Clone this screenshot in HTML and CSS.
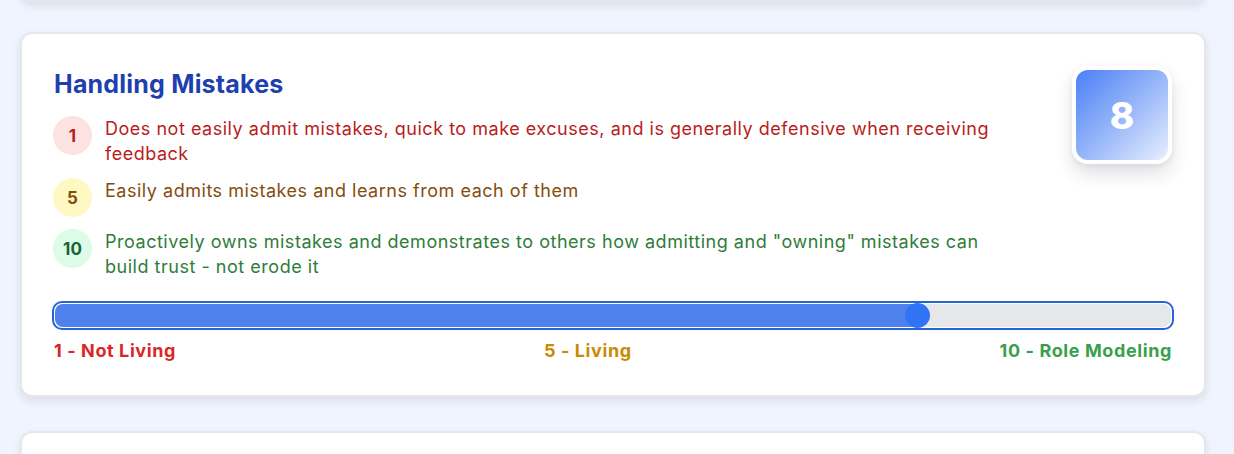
FILE: index.html
```html
<!DOCTYPE html>
<html lang="en">
<head>
<meta charset="utf-8">
<title>Handling Mistakes</title>
<link rel="stylesheet" href="styles.css">
</head>
<body>
<div class="list">
  <div class="card card-prev"></div>

  <section class="card">
    <div class="head">
      <div class="info">
        <h2 class="title">Handling Mistakes</h2>
        <ul class="levels">
          <li class="level level-red">
            <span class="num">1</span>
            <p class="desc">Does not easily admit mistakes, quick to make excuses, and is generally defensive when receiving feedback</p>
          </li>
          <li class="level level-yellow">
            <span class="num">5</span>
            <p class="desc">Easily admits mistakes and learns from each of them</p>
          </li>
          <li class="level level-green">
            <span class="num">10</span>
            <p class="desc">Proactively owns mistakes and demonstrates to others how admitting and "owning" mistakes can build trust - not erode it</p>
          </li>
        </ul>
      </div>
      <div class="score">8</div>
    </div>

    <div class="slider">
      <div class="track">
        <div class="fill" style="width: 77.3%"></div>
        <div class="thumb" style="left: 77.3%"></div>
      </div>
    </div>
    <div class="scale">
      <span class="scale-red">1 - Not Living</span>
      <span class="scale-yellow">5 - Living</span>
      <span class="scale-green">10 - Role Modeling</span>
    </div>
  </section>

  <div class="card card-next"></div>
</div>
</body>
</html>
```

FILE: styles.css
```css
* { box-sizing: border-box; }

html, body {
  margin: 0;
  padding: 0;
  background: #eff4fe;
  font-family: Inter, "Noto Sans", "Liberation Sans", sans-serif;
  overflow: hidden;
}

.list {
  display: flex;
  flex-direction: column;
  gap: 30px;
  padding: 0 28px 0 20px;
  margin-top: -60px;
}

.card {
  background: #ffffff;
  border: 2px solid #e5e7eb;
  border-radius: 12px;
  box-shadow: 0 4px 8px rgba(30, 41, 59, 0.10);
  padding: 34px 32px 32px;
}

.card-prev { height: 62px; padding: 0; }
.card-next { height: 80px; padding: 0; margin-top: 4px; }

.head {
  display: flex;
  align-items: flex-start;
  gap: 62px;
}

.info { flex: 1; min-width: 0; }

.title {
  margin: 0 0 16px;
  font-size: 25px;
  line-height: 32px;
  font-weight: 700;
  color: #1e40af;
  letter-spacing: 0.2px;
}

.levels {
  list-style: none;
  margin: 0;
  padding: 0;
  display: flex;
  flex-direction: column;
  gap: 12px;
}

.level {
  display: flex;
  align-items: flex-start;
  gap: 13px;
}

.num {
  flex: 0 0 39px;
  width: 39px;
  height: 39px;
  border-radius: 50%;
  display: flex;
  align-items: center;
  justify-content: center;
  font-size: 17px;
  font-weight: 700;
  margin-left: -1px;
}

.desc {
  margin: 0;
  font-size: 18px;
  line-height: 25px;
  letter-spacing: 0.52px;
}

.level-red .num { background: #fde2e2; color: #b91c1c; }
.level-red .desc { color: #b91c1c; }
.level-yellow .num { background: #fef9c3; color: #854d0e; }
.level-yellow .desc { color: #854d0e; }
.level-green .num { background: #dcfce7; color: #166534; }
.level-green .desc { color: #2e7d3a; }

.score {
  flex: 0 0 100px;
  width: 100px;
  height: 98px;
  margin-top: -2px;
  border: 4px solid #ffffff;
  border-radius: 16px;
  background: linear-gradient(135deg, #4a7ff6 0%, #9dbbf9 55%, #e8efff 100%);
  box-shadow: 0 10px 18px rgba(30, 41, 59, 0.14), 0 2px 6px rgba(30, 41, 59, 0.06);
  display: flex;
  align-items: center;
  justify-content: center;
  color: #ffffff;
  font-size: 37px;
  font-weight: 800;
}

.slider {
  margin: 22px -2px 0;
  border: 2px solid #2563d9;
  border-radius: 10px;
  padding: 1px;
  background: #ffffff;
}

.track {
  position: relative;
  height: 23px;
  border-radius: 8px;
  background: #e5e7eb;
}

.fill {
  height: 100%;
  border-radius: 8px 0 0 8px;
  background: #4e82ea;
}

.thumb {
  position: absolute;
  top: -1px;
  width: 25px;
  height: 25px;
  margin-left: -12.5px;
  border-radius: 50%;
  background: #3173f5;
}

.scale {
  display: flex;
  justify-content: space-between;
  margin-top: 9px;
  font-size: 18px;
  line-height: 24px;
  font-weight: 700;
  letter-spacing: 0.6px;
}

.scale-red { color: #dc2626; }
.scale-yellow { color: #ca8a04; }
.scale-green { color: #3a9f4c; }
```
